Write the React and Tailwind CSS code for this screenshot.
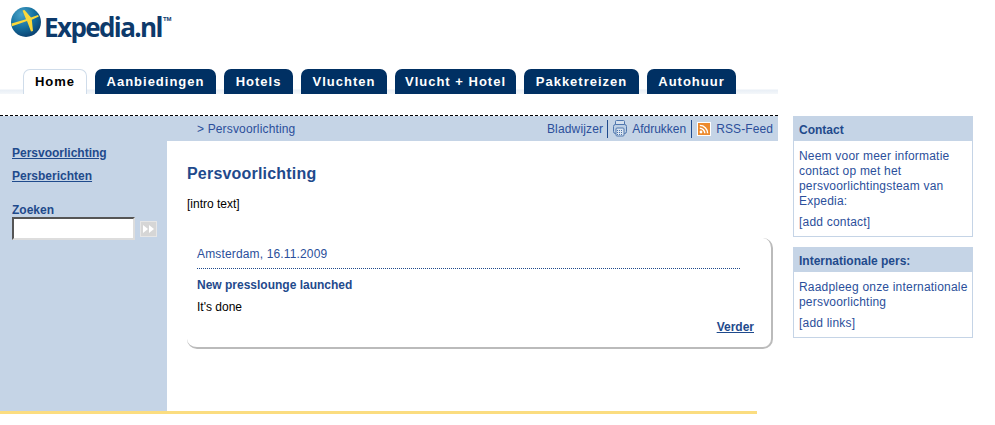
const tabs = [
  { label: "Aanbiedingen", w: "w-[121px]" },
  { label: "Hotels", w: "w-[69px]" },
  { label: "Vluchten", w: "w-[86px]" },
  { label: "Vlucht + Hotel", w: "w-[121px]" },
  { label: "Pakketreizen", w: "w-[115px]" },
  { label: "Autohuur", w: "w-[89px]" },
];

function Logo() {
  return (
    <div className="flex items-start pl-[11px] pt-[7px] h-[69px]">
      <svg width="31" height="34" viewBox="0 0 31 34" className="shrink-0">
        <defs>
          <radialGradient id="globe" cx="35%" cy="25%" r="80%">
            <stop offset="0%" stopColor="#4aa3c9" />
            <stop offset="55%" stopColor="#14709f" />
            <stop offset="100%" stopColor="#0b3f6f" />
          </radialGradient>
        </defs>
        <circle cx="15" cy="15" r="15" fill="url(#globe)" />
        <path d="M0.5 16.5 L15 12.2 L11.5 3.5 L13.5 3 L20 10.6 L27 8 L27.8 9.6 L20.8 12.8 L22 24 L20 24.5 L16 14 L1 19.2 Z" fill="#fbd83a" />
      </svg>
      <span className="ml-[2px] mt-[2px] font-['Open_Sans',sans-serif] font-bold text-[26px] leading-[36px] tracking-[-1.6px] text-[#0d3a6b]">
        Expedia.nl
      </span>
      <span className="mt-[8px] ml-px font-['Liberation_Sans',sans-serif] font-bold text-[6px] leading-[8px] text-[#0d3a6b]">TM</span>
    </div>
  );
}

function PrinterIcon() {
  return (
    <svg width="14" height="17" viewBox="0 0 14 17" fill="none" stroke="#4f76ad" strokeWidth="1">
      <rect x="2.5" y="0.5" width="9" height="5" rx="1" fill="#d5e0ed" />
      <rect x="0.5" y="4.5" width="13" height="9" rx="2" fill="#bdcfe4" />
      <rect x="3" y="8" width="8" height="8" rx="1" fill="#dbe5f0" />
      <path d="M4 10.5h6M4 12.5h6M4 14.5h6" strokeDasharray="1 1" />
    </svg>
  );
}

function RssIcon() {
  return (
    <svg width="14" height="14" viewBox="0 0 14 14">
      <rect width="14" height="14" fill="#fff" />
      <rect x="1" y="1" width="12" height="12" fill="#ec8a2e" />
      <circle cx="4" cy="10" r="1.4" fill="#fff" />
      <path d="M2.8 6.2a5 5 0 0 1 5 5M2.8 3.4a7.8 7.8 0 0 1 7.8 7.8" fill="none" stroke="#fff" strokeWidth="1.4" />
    </svg>
  );
}

function SideBox({ title, children }) {
  return (
    <div className="border border-[#c5d4e6] border-t-0">
      <div className="bg-[#c5d4e6] h-[25px] -mx-px pl-[6px] pt-[2px] flex items-center font-bold text-[12px] text-[#1f4a8c]">
        {title}
      </div>
      <div className="pl-[5px] pr-0 pt-[8px] pb-[6px] text-[12px] leading-[15px] tracking-[0.2px] text-[#2b4f9b]">
        {children}
      </div>
    </div>
  );
}

export default function App() {
  return (
    <div className="w-[995px] h-[425px] bg-white overflow-hidden font-['Liberation_Sans',Arial,sans-serif]">
      <Logo />

      {/* TABS */}
      <div className="w-[778px] h-[25px] pl-[23px] flex gap-[8px] bg-[linear-gradient(to_bottom,#ffffff_0,#ffffff_20px,#e9eff6_21px,#f4f7fa_25px)]">
        <div className="w-[64px] h-[25px] bg-white border border-b-0 border-[#cfdcea] rounded-t-[7px] flex items-center justify-center font-bold text-[13px] tracking-[1px] text-black">
          Home
        </div>
        {tabs.map((tab) => (
          <div
            key={tab.label}
            className={`${tab.w} h-[25px] bg-[#003063] rounded-t-[7px] flex items-center justify-center font-bold text-[13px] tracking-[1px] text-white`}
          >
            {tab.label}
          </div>
        ))}
      </div>

      <div className="flex mt-[21px]">
        {/* MAIN COLUMN */}
        <div className="w-[778px]">
          <div className="h-[2px] border-t border-dashed border-black" />
          <div className="h-[25px] -mt-px bg-[#c5d4e6] flex items-center text-[12px] tracking-[0.15px] text-[#2b4f9b]">
            <div className="ml-[197px]">&gt; Persvoorlichting</div>
            <div className="ml-auto pr-[5px] flex items-center h-[20px]">
              <span>Bladwijzer</span>
              <span className="ml-[4px] w-px h-[18px] bg-[#1f4a8c]" />
              <span className="ml-[5px] flex"><PrinterIcon /></span>
              <span className="ml-[5px] tracking-normal">Afdrukken</span>
              <span className="ml-[5px] w-px h-[18px] bg-[#1f4a8c]" />
              <span className="ml-[5px] flex"><RssIcon /></span>
              <span className="ml-[5px] tracking-[0.1px]">RSS-Feed</span>
            </div>
          </div>

          <div className="flex h-[270px]">
            {/* LEFT NAV */}
            <div className="w-[167px] bg-[#c5d4e6] pl-[12px] pt-[5px] text-[12px] font-bold text-[#1f4a8c]">
              <a className="block underline leading-[14px]">Persvoorlichting</a>
              <a className="block underline leading-[14px] mt-[9px]">Persberichten</a>
              <div className="mt-[20px] leading-[14px]">Zoeken</div>
              <div className="flex items-center">
                <input className="w-[123px] h-[23px] bg-white border-2 border-t-[#555] border-l-[#555] border-r-[#ddd] border-b-[#ddd]" />
                <div className="ml-[5px] w-[17px] h-[16px] bg-[#d6d6d6] border border-[#e6e6e6] flex items-center justify-center gap-px">
                  <span className="w-0 h-0 border-y-[4px] border-y-transparent border-l-[5px] border-l-white" />
                  <span className="w-0 h-0 border-y-[4px] border-y-transparent border-l-[5px] border-l-white" />
                </div>
              </div>
            </div>

            {/* CONTENT */}
            <div className="flex-1 pl-[20px] pt-[23px]">
              <h1 className="font-bold text-[16px] leading-[20px] tracking-[0.2px] text-[#1f4a8c]">Persvoorlichting</h1>
              <p className="mt-[13px] text-[12px] leading-[15px] text-black">[intro text]</p>
              <div className="mt-[26px] w-[586px] h-[111px] rounded-[10px] bg-white border-r-2 border-b-2 border-[#bbbbbb] pl-[10px] pt-[9px]">
                <div className="text-[12px] leading-[15px] tracking-[0.15px] text-[#2b4f9b]">Amsterdam, 16.11.2009</div>
                <div className="mt-[6px] w-[543px] border-t border-dotted border-[#1f4a8c]" />
                <div className="mt-[9px] font-bold text-[12px] leading-[15px] text-[#1f4a8c]">New presslounge launched</div>
                <div className="mt-[7px] text-[12px] leading-[15px] text-black">It's done</div>
                <div className="mt-[3px] pr-[17px] text-right leading-[15px]">
                  <a className="font-bold text-[12px] leading-[15px] underline text-[#1f4a8c]">Verder</a>
                </div>
              </div>
            </div>
          </div>
          <div className="w-[757px] h-[3px] bg-[#fbdd80]" />
        </div>

        {/* RIGHT COLUMN */}
        <div className="ml-[15px] w-[180px] flex flex-col gap-[10px] mt-px">
          <SideBox title="Contact">
            <p>Neem voor meer informatie contact op met het persvoorlichtingsteam van Expedia:</p>
            <p className="mt-[6px]">[add contact]</p>
          </SideBox>
          <SideBox title="Internationale pers:">
            <p>Raadpleeg onze internationale persvoorlichting</p>
            <p className="mt-[6px]">[add links]</p>
          </SideBox>
        </div>
      </div>
    </div>
  );
}
